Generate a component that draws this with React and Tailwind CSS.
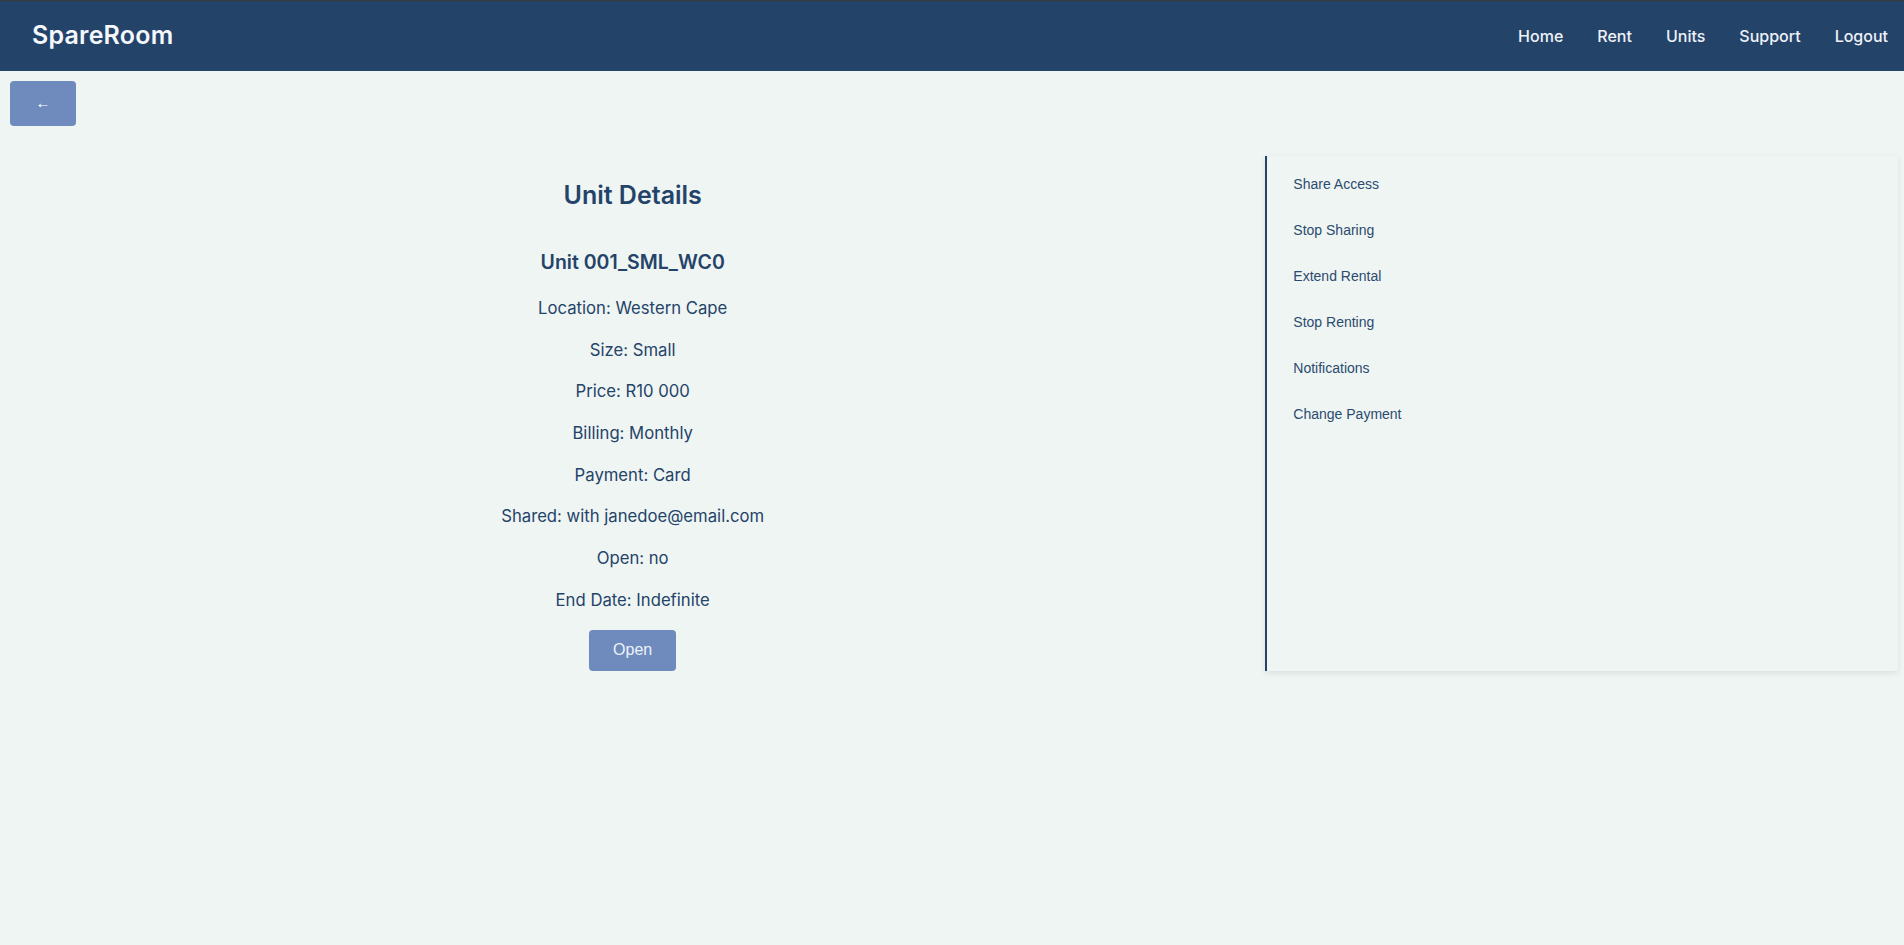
export default function App() {
  const details = [
    "Location: Western Cape",
    "Size: Small",
    "Price: R10 000",
    "Billing: Monthly",
    "Payment: Card",
    "Shared: with janedoe@email.com",
    "Open: no",
    "End Date: Indefinite",
  ];
  const actions = [
    "Share Access",
    "Stop Sharing",
    "Extend Rental",
    "Stop Renting",
    "Notifications",
    "Change Payment",
  ];
  const nav = ["Home", "Rent", "Units", "Support", "Logout"];

  return (
    <div className="min-h-[945px] bg-[#eff5f3] font-['Inter',sans-serif] text-[#244369]">
      <header className="h-[71px] bg-[#244369] border-t border-[#3a3a3a] flex items-center justify-between pl-[32px] pr-[16px]">
        <h1 className="text-[25px] font-semibold text-[#f4f7fb] tracking-[0.2px]">SpareRoom</h1>
        <nav className="flex items-center gap-[34px]">
          {nav.map((n) => (
            <a key={n} href="#" className="text-[16px] font-medium text-[#eef2f8]">
              {n}
            </a>
          ))}
        </nav>
      </header>

      <button className="ml-[10px] mt-[10px] w-[66px] h-[45px] rounded-[4px] bg-[#6f8abd] text-white text-[15px] font-['Liberation_Sans',sans-serif]">
        ←
      </button>

      <div className="mt-[30px] grid grid-cols-[2fr_1fr] pr-[6px]">
        <section className="flex flex-col items-center pt-[23px]">
          <h2 className="text-[25px] leading-[32px] font-semibold">Unit Details</h2>
          <h3 className="mt-[37px] text-[19.5px] leading-[28px] font-semibold">Unit 001_SML_WC0</h3>
          <div className="mt-[20px] flex flex-col items-center gap-[17.7px]">
            {details.map((d) => (
              <p key={d} className="text-[16.7px] leading-[24px]">
                {d}
              </p>
            ))}
            <button className="w-[87px] h-[41px] rounded-[4px] bg-[#6f8abd] text-[#eef2fa] text-[16px] font-['Liberation_Sans',sans-serif]">
              Open
            </button>
          </div>
        </section>

        <aside className="border-l-[2px] border-[#244369] shadow-[0_2px_6px_rgba(0,0,0,0.09)] pt-[5px] font-['Liberation_Sans',sans-serif]">
          {actions.map((a) => (
            <div key={a} className="h-[46px] flex items-center pl-[26px] text-[14px] text-[#2b4a6f]">
              {a}
            </div>
          ))}
        </aside>
      </div>
    </div>
  );
}
